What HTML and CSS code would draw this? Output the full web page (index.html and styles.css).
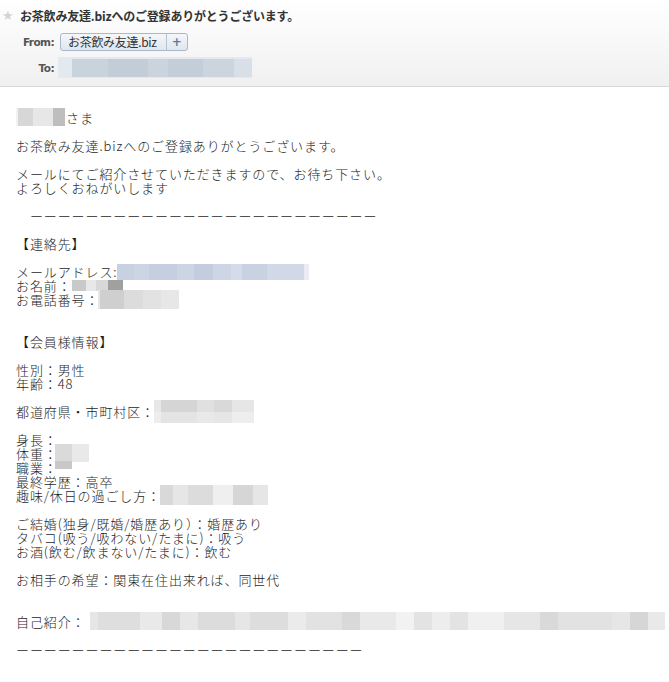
FILE: index.html
```html
<!DOCTYPE html>
<html lang="ja">
<head>
<meta charset="utf-8">
<title>お茶飲み友達.bizへのご登録ありがとうございます。</title>
<link rel="stylesheet" href="styles.css">
</head>
<body>
<div class="header">
  <div class="subject"><span class="star">★</span><span class="subject-text">お茶飲み友達.bizへのご登録ありがとうございます。</span></div>
  <div class="hrow from-row">
    <span class="hlabel">From:</span>
    <span class="chip"><span class="chip-name">お茶飲み友達.biz</span><span class="chip-add">+</span></span>
  </div>
  <div class="hrow to-row">
    <span class="hlabel">To:</span>
    <span class="mosaic m-to"></span>
  </div>
</div>
<div class="mail">
  <p class="para"><span class="mosaic m-sama"></span>さま</p>
  <p class="para">お茶飲み友達.bizへのご登録ありがとうございます。</p>
  <p class="para">メールにてご紹介させていただきますので、お待ち下さい。<br>よろしくおねがいします</p>
  <p class="para">　ーーーーーーーーーーーーーーーーーーーーーーーーー</p>
  <p class="para">【連絡先】</p>
  <p class="para gap2">メールアドレス:<span class="mosaic m-mail"></span><br>お名前：<span class="mosaic m-name"></span><br>お電話番号：<span class="mosaic m-tel"></span></p>
  <p class="para">【会員様情報】</p>
  <p class="para">性別：男性<br>年齢：48</p>
  <p class="para">都道府県・市町村区：<span class="mosaic m-pref"></span></p>
  <p class="para">身長：<br>体重：<span class="mosaic m-weight"></span><br>職業：<span class="mosaic m-job"></span><br>最終学歴：高卒<br>趣味/休日の過ごし方：<span class="mosaic m-hobby"></span></p>
  <p class="para">ご結婚(独身/既婚/婚歴あり）：婚歴あり<br>タバコ(吸う/吸わない/たまに)：吸う<br>お酒(飲む/飲まない/たまに)：飲む</p>
  <p class="para gap2">お相手の希望：関東在住出来れば、同世代</p>
  <p class="para">自己紹介：<span class="mosaic m-intro"></span></p>
  <p class="para">ーーーーーーーーーーーーーーーーーーーーーーーーー</p>
</div>
</body>
</html>
```
FILE: styles.css
```css
html, body {
  margin: 0;
  padding: 0;
  background: #ffffff;
}

body {
  width: 669px;
  font-family: "Noto Sans CJK JP", "Liberation Sans", sans-serif;
  color: #333333;
}

.header {
  height: 87px;
  box-sizing: border-box;
  border-bottom: 1px solid #d9d9d9;
  background: linear-gradient(#ffffff, #f0f0f0);
  padding-top: 7px;
}

.subject {
  display: flex;
  align-items: center;
  height: 18px;
  padding-left: 2px;
}

.star {
  font-size: 13px;
  color: #d4d4d4;
  width: 18px;
  line-height: 18px;
  font-family: "DejaVu Sans", sans-serif;
}

.subject-text {
  font-size: 12px;
  font-weight: bold;
  color: #333333;
  line-height: 18px;
  letter-spacing: -0.2px;
}

.hrow {
  display: flex;
  align-items: center;
}

.from-row {
  margin-top: 8px;
  height: 18px;
}

.to-row {
  margin-top: 6px;
  height: 21px;
}

.hlabel {
  width: 54px;
  text-align: right;
  font-family: "DejaVu Sans", sans-serif;
  font-size: 10.5px;
  font-weight: bold;
  color: #555555;
  letter-spacing: -0.6px;
}

.from-row .hlabel {
  margin-right: 6px;
}

.to-row .hlabel {
  margin-right: 4px;
}

.chip {
  display: flex;
  height: 18px;
  box-sizing: border-box;
  border: 1px solid #a9b8cb;
  border-radius: 3px;
  background: linear-gradient(#f4f7fa, #dfe6ef);
  font-size: 12px;
  line-height: 16px;
}

.chip-name {
  padding: 0 9px 0 7px;
  color: #333333;
  letter-spacing: -0.3px;
}

.chip-add {
  width: 20px;
  text-align: center;
  border-left: 1px solid #b5c2d2;
  color: #5a7ca6;
  font-weight: bold;
  font-family: "DejaVu Sans", sans-serif;
  font-size: 12px;
}

.mail {
  padding: 24px 0 0 16px;
  font-size: 13px;
  letter-spacing: 0.9px;
  line-height: 14px;
  font-weight: 300;
  color: #1e1e1e;
}

.para {
  margin: 0 0 14px 0;
  white-space: nowrap;
}

.para.gap2 {
  margin-bottom: 28px;
}

.mosaic {
  display: inline-block;
  vertical-align: top;
}

.m-to {
  width: 194px;
  height: 21px;
  margin-left: 0;
  background:
    linear-gradient(90deg, transparent 0 14px, #c9d3dc 14px 50px, #c3cdd7 50px 90px, #cbd4dd 90px 110px, #c4ced8 110px 145px, #ccd5de 145px 176px, #d8dfe6 176px 194px) 0 2px / 194px 18px no-repeat,
    #e3e9ee;
}

.m-sama {
  width: 49px;
  height: 18px;
  margin: -3px 1px -1px 0;
  background: linear-gradient(90deg, #f2f2f2 0 2px, #d7d7d7 2px 17px, #e7e7e7 17px 37px, #bebebe 37px 49px);
}

.m-mail {
  width: 192px;
  height: 16px;
  margin: -1px 0 -1px 0;
  background: linear-gradient(90deg, #c7d1e1 0 17px, #ccd5e4 17px 32px, #c5cfe0 32px 60px, #ccd5e4 60px 77px, #c3cddf 77px 96px, #cdd6e5 96px 114px, #d5dce8 114px 125px, #c9d2e2 125px 150px, #d2d9e6 150px 187px, #e9ecf3 187px 192px);
}

.m-name {
  width: 51px;
  height: 11px;
  margin: 1px 0 -2px 0;
  background: linear-gradient(90deg, #c9c9c9 0 14px, #e8e8e8 14px 24px, #d8d8d8 24px 36px, #a0a0a0 36px 51px);
}

.m-tel {
  width: 81px;
  height: 19px;
  margin: -3px 0 -2px -1px;
  background: linear-gradient(90deg, #e6e6e6 0 2px, #cfcfcf 2px 26px, #dcdcdc 26px 45px, #e2e2e2 45px 63px, #e7e7e7 63px 81px);
}

.m-pref {
  width: 100px;
  height: 23px;
  margin: -5px 0 -4px -1px;
  background:
    linear-gradient(90deg, #e8e8e8 0 7px, #d5d5d5 7px 43px, #e0e0e0 43px 60px, #d9d9d9 60px 78px, #e6e6e6 78px 100px) 0 0 / 100px 12px no-repeat,
    linear-gradient(90deg, #eeeeee 0 7px, #e4e4e4 7px 43px, #e9e9e9 43px 60px, #e6e6e6 60px 78px, #eeeeee 78px 100px);
}

.m-weight {
  width: 34px;
  height: 18px;
  margin: -3px 0 -1px -3px;
  background: linear-gradient(90deg, #dadada 0 17px, #e9e9e9 17px 34px);
}

.m-job {
  width: 17px;
  height: 8px;
  margin: 0 0 -8px -3px;
  background: #c8c8c8;
}

.m-hobby {
  width: 108px;
  height: 20px;
  margin: -4px 0 -2px -1px;
  background: linear-gradient(90deg, #d9d9d9 0 13px, #e6e6e6 13px 28px, #dcdcdc 28px 53px, #efefef 53px 73px, #d6d6d6 73px 93px, #e6e6e6 93px 108px);
}

.m-intro {
  width: 575px;
  height: 18px;
  margin: -3px 0 -1px 4px;
  background: linear-gradient(90deg,
    #e6e6e6 0 8px, #dedede 8px 50px, #e9e9e9 50px 72px, #d8d8d8 72px 90px, #e7e7e7 90px 108px,
    #dcdcdc 108px 145px, #e6e6e6 145px 160px, #dddddd 160px 198px, #ebebeb 198px 216px, #e2e2e2 216px 252px,
    #d9d9d9 252px 270px, #e9e9e9 270px 306px, #f2f2f2 306px 324px, #e3e3e3 324px 342px, #ededed 342px 360px,
    #e3e3e3 360px 378px, #f0f0f0 378px 414px, #e6e6e6 414px 450px, #d9d9d9 450px 468px, #e2e2e2 468px 522px,
    #e6e6e6 522px 540px, #d6d6d6 540px 558px, #e9e9e9 558px 575px);
}
```
